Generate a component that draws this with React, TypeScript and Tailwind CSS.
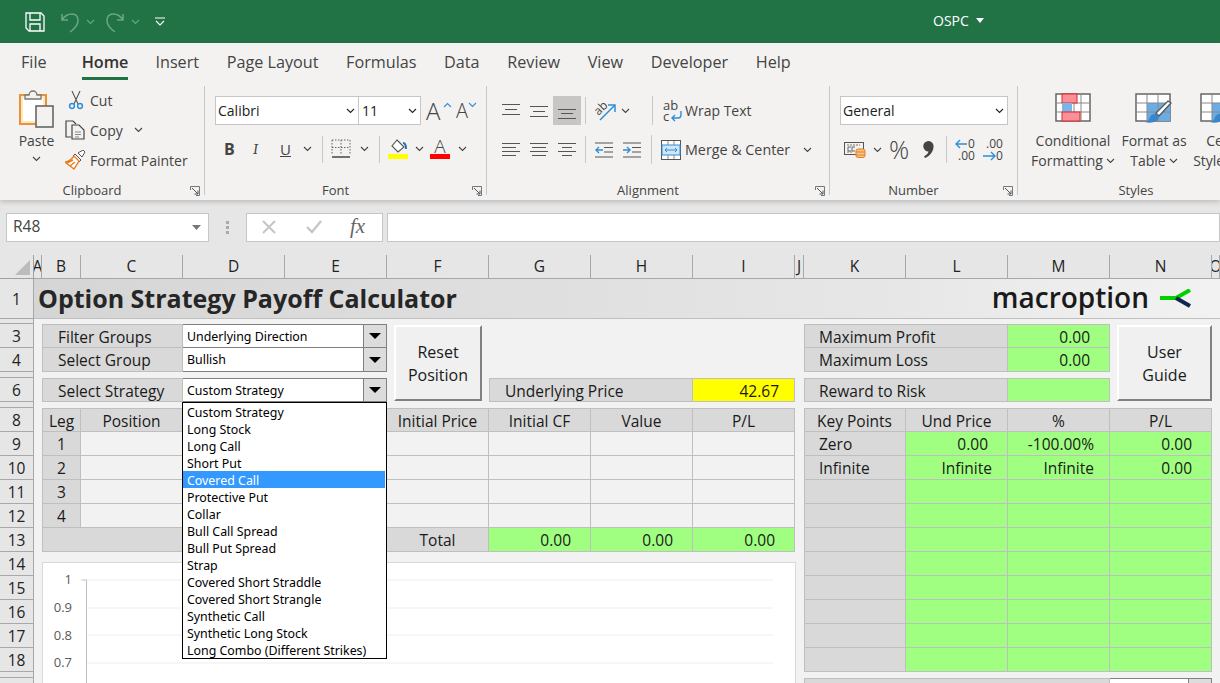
import type { ReactNode } from 'react';

const tabs = ['Insert', 'Page Layout', 'Formulas', 'Data', 'Review', 'View', 'Developer', 'Help'];

const strategies = [
  'Custom Strategy', 'Long Stock', 'Long Call', 'Short Put', 'Covered Call', 'Protective Put', 'Collar',
  'Bull Call Spread', 'Bull Put Spread', 'Strap', 'Covered Short Straddle', 'Covered Short Strangle',
  'Synthetic Call', 'Synthetic Long Stock', 'Long Combo (Different Strikes)',
];

const colHeaders = [
  { col: 'col-start-2', label: 'A' }, { col: 'col-start-3', label: 'B' }, { col: 'col-start-4', label: 'C' },
  { col: 'col-start-5', label: 'D' }, { col: 'col-start-6', label: 'E' }, { col: 'col-start-7', label: 'F' },
  { col: 'col-start-8', label: 'G' }, { col: 'col-start-9', label: 'H' }, { col: 'col-start-10', label: 'I' },
  { col: 'col-start-11', label: 'J' }, { col: 'col-start-12', label: 'K' }, { col: 'col-start-13', label: 'L' },
  { col: 'col-start-14', label: 'M' }, { col: 'col-start-15', label: 'N' }, { col: 'col-start-16', label: 'O' },
];

const rowHeaders = [
  { row: 'row-start-2', label: '1' }, { row: 'row-start-3', label: '' }, { row: 'row-start-4', label: '3' },
  { row: 'row-start-5', label: '4' }, { row: 'row-start-6', label: '' }, { row: 'row-start-7', label: '6' },
  { row: 'row-start-8', label: '' }, { row: 'row-start-9', label: '8' }, { row: 'row-start-10', label: '9' },
  { row: 'row-start-11', label: '10' }, { row: 'row-start-12', label: '11' }, { row: 'row-start-13', label: '12' },
  { row: 'row-start-14', label: '13' }, { row: 'row-start-15', label: '14' }, { row: 'row-start-16', label: '15' },
  { row: 'row-start-17', label: '16' }, { row: 'row-start-18', label: '17' }, { row: 'row-start-19', label: '18' },
  { row: 'row-start-20', label: '' }, { row: 'row-start-21', label: '' },
];

const legRows = [
  { row: 'row-start-10', leg: '1' }, { row: 'row-start-11', leg: '2' },
  { row: 'row-start-12', leg: '3' }, { row: 'row-start-13', leg: '4' },
];

const keyRows = [
  { row: 'row-start-10', label: 'Zero', a: '0.00', aPad: 'pr-[19px]', b: '-100.00%', c: '0.00' },
  { row: 'row-start-11', label: 'Infinite', a: 'Infinite', aPad: 'pr-[15px]', b: 'Infinite', c: '0.00' },
  { row: 'row-start-12', label: '', a: '', aPad: '', b: '', c: '' },
  { row: 'row-start-13', label: '', a: '', aPad: '', b: '', c: '' },
  { row: 'row-start-14', label: '', a: '', aPad: '', b: '', c: '' },
  { row: 'row-start-15', label: '', a: '', aPad: '', b: '', c: '' },
  { row: 'row-start-16', label: '', a: '', aPad: '', b: '', c: '' },
  { row: 'row-start-17', label: '', a: '', aPad: '', b: '', c: '' },
  { row: 'row-start-18', label: '', a: '', aPad: '', b: '', c: '' },
  { row: 'row-start-19', label: '', a: '', aPad: '', b: '', c: '' },
];

function Chevron({ className = '', color = '#444' }: { className?: string; color?: string }) {
  return (
    <svg width="9" height="6" viewBox="0 0 9 6" className={`shrink-0 ${className}`}>
      <path d="M1 1l3.5 3.5L8 1" fill="none" stroke={color} strokeWidth="1.1" />
    </svg>
  );
}

function Launcher() {
  return (
    <svg width="10" height="10" viewBox="0 0 10 10" className="shrink-0">
      <path d="M.5 4V.5H9.5V9.5H6" fill="none" stroke="#777" />
      <path d="M2 2l6 6M8 4.5V8H4.5" fill="none" stroke="#555" />
    </svg>
  );
}

function Sep({ className = '' }: { className?: string }) {
  return <div className={`w-px bg-[#c8c8c8] shrink-0 ${className}`} />;
}

function GroupLabel({ children }: { children: ReactNode }) {
  return (
    <div className="flex items-center h-[20px] pt-[2px] text-[13px] text-[#444]">
      <div className="flex-1 text-center">{children}</div>
      <div className="w-5 flex justify-end pr-[4px]"><Launcher /></div>
    </div>
  );
}

function Lines({ rows }: { rows: [number, number][] }) {
  return (
    <svg width="18" height="18" viewBox="0 0 18 18" className="shrink-0">
      {rows.map(([x, y], i) => (
        <path key={i} d={`M${x} ${y + 0.5}H${18 - (i % 2 === 1 && x === 0 ? 4 : x)}`} stroke="#555" strokeWidth="1" />
      ))}
    </svg>
  );
}

function PasteIcon() {
  return (
    <svg width="36" height="40" viewBox="0 0 36 40">
      <rect x="1" y="6" width="26" height="29" fill="#fde9c0" stroke="#e8923a" strokeWidth="2" />
      <rect x="4" y="9" width="20" height="23" fill="#fff" />
      <path d="M6 10V6h4a4 4 0 0 1 8 0h4v4z" fill="#f3f2f1" stroke="#777" strokeWidth="1.3" />
      <rect x="17" y="17" width="17" height="21" fill="#f3f2f1" stroke="#666" strokeWidth="1.6" />
    </svg>
  );
}

function CutIcon() {
  return (
    <svg width="16" height="20" viewBox="0 0 16 20">
      <path d="M4 1l6 13M12 1L6 14" fill="none" stroke="#555" strokeWidth="1.1" />
      <circle cx="4" cy="16" r="2.4" fill="none" stroke="#2e8fd8" strokeWidth="1.5" />
      <circle cx="12" cy="16" r="2.4" fill="none" stroke="#2e8fd8" strokeWidth="1.5" />
    </svg>
  );
}

function CopyIcon() {
  return (
    <svg width="20" height="20" viewBox="0 0 20 20">
      <path d="M6 17H1V1h7l3 3" fill="none" stroke="#444" strokeWidth="1.2" />
      <path d="M7 5h7l5 5v9H7z" fill="#f3f2f1" stroke="#444" strokeWidth="1.2" />
      <path d="M10 12h6M10 14.5h6M10 17h4" stroke="#888" />
    </svg>
  );
}

function PainterIcon() {
  return (
    <svg width="21" height="20" viewBox="0 0 21 20">
      <path d="M13 3l5-3 2 2-3 5z" fill="#fff" stroke="#555" />
      <path d="M10 4l6 6-2 2-6-6z" fill="#fff" stroke="#555" />
      <path d="M9 6l5 5-5 8-9-7c3 0 6-2 9-6z" fill="#fff" stroke="#e67e22" strokeWidth="1.4" />
      <path d="M2 13l6-3M5 16l5-4" stroke="#e67e22" strokeWidth="1.4" />
    </svg>
  );
}

function BordersIcon() {
  return (
    <svg width="20" height="20" viewBox="0 0 20 20">
      <path d="M1 1H19V16M1 1V16M10 1V16M1 8.5H19" fill="none" stroke="#666" strokeDasharray="1.5 1.5" />
      <path d="M1 18H19" stroke="#444" strokeWidth="1.5" />
    </svg>
  );
}

function FillIcon() {
  return (
    <svg width="20" height="20" viewBox="0 0 20 20">
      <path d="M9 1l7 7-6 5-6-6z" fill="#fff" stroke="#555" strokeWidth="1.1" />
      <path d="M15 4c2 0 3 2 3 6" fill="none" stroke="#1f6fb5" strokeWidth="2" />
      <rect y="15" width="20" height="5" fill="#ffff00" />
    </svg>
  );
}

function OrientIcon() {
  return (
    <svg width="22" height="20" viewBox="0 0 22 20" className="overflow-visible">
      <text x="0" y="12" transform="rotate(-45 6 8)" fontSize="12" fill="#444" fontFamily="Open Sans">ab</text>
      <path d="M6 19L20 5M14 4h7v7" fill="none" stroke="#2e8fd8" strokeWidth="1.5" />
    </svg>
  );
}

function IndentIcon({ out }: { out: boolean }) {
  return (
    <svg width="18" height="16" viewBox="0 0 18 16">
      <path d="M0 1H18M9 5.5H18M9 10H18M0 15H18" stroke="#555" />
      <path d={out ? 'M8 8H1M4 5L1 8l3 3' : 'M0 8h7M4 5l3 3-3 3'} fill="none" stroke="#2e8fd8" strokeWidth="1.4" />
    </svg>
  );
}

function WrapIcon() {
  return (
    <svg width="20" height="22" viewBox="0 0 20 22" className="overflow-visible">
      <text x="0" y="10" fontSize="13" fill="#444" fontFamily="Open Sans">ab</text>
      <text x="0" y="21" fontSize="13" fill="#444" fontFamily="Open Sans">c</text>
      <path d="M18 11v4a3 3 0 0 1-3 3H9M12 15l-3 3 3 3" fill="none" stroke="#2e8fd8" strokeWidth="1.4" />
    </svg>
  );
}

function MergeIcon() {
  return (
    <svg width="20" height="20" viewBox="0 0 20 20">
      <rect x=".5" y=".5" width="19" height="19" fill="#fff" stroke="#555" />
      <rect x="1" y="5" width="18" height="10" fill="#cfe6f7" stroke="#2e8fd8" />
      <path d="M7 1V5M13 1V5M7 15V19M13 15V19" stroke="#888" />
      <path d="M4 10H16M6 8l-2 2 2 2M14 8l2 2-2 2" fill="none" stroke="#2e8fd8" />
    </svg>
  );
}

function AccountingIcon() {
  return (
    <svg width="22" height="17" viewBox="0 0 22 17">
      <rect x=".5" y="1.5" width="19" height="12" fill="#f3f2f1" stroke="#555" />
      <path d="M3 4H16M3 11H9" stroke="#777" strokeDasharray="2 1" />
      <path d="M7 6H4V10H7M11 6H8V10H11" fill="none" stroke="#666" />
      <rect x="12" y="8" width="9" height="8.5" rx="2" fill="#f7c48a" stroke="#e67e22" />
      <path d="M12 11h9M12 14h9" stroke="#e67e22" />
    </svg>
  );
}

function CommaIcon() {
  return (
    <svg width="11" height="17" viewBox="0 0 11 17">
      <path d="M5.5 0a5 5 0 0 1 5 5.5C10.500 11 6.500 15 2 17L1 15.500C3.500 14 5 12.500 5.500 10.500A5 5 0 0 1 5.500 0z" fill="#444" />
    </svg>
  );
}

function DecimalIcon({ inc }: { inc: boolean }) {
  return (
    <svg width="21" height="24" viewBox="0 0 21 24" className="overflow-visible">
      {inc ? (
        <>
          <path d="M12 6H1M5 2L1 6l4 4" fill="none" stroke="#2e8fd8" strokeWidth="1.4" />
          <text x="13" y="10" fontSize="12" fill="#444" fontFamily="Open Sans">0</text>
          <text x="3" y="22" fontSize="12" fill="#444" fontFamily="Open Sans">.00</text>
        </>
      ) : (
        <>
          <text x="3" y="10" fontSize="12" fill="#444" fontFamily="Open Sans">.00</text>
          <path d="M0 18h12M8 14l4 4-4 4" fill="none" stroke="#2e8fd8" strokeWidth="1.4" />
          <text x="13" y="22" fontSize="12" fill="#444" fontFamily="Open Sans">0</text>
        </>
      )}
    </svg>
  );
}

function CondIcon() {
  return (
    <svg width="36" height="29" viewBox="0 0 36 29">
      <rect x="1" y="1" width="34" height="27" fill="#fff" stroke="#666" strokeWidth="1.5" />
      <path d="M8 1V28M19 1V28M26 1V28M1 10H35M1 19H35" stroke="#888" />
      <rect x="7" y="1" width="15" height="9" fill="#fb8f9a" stroke="#d62a2a" />
      <rect x="7" y="10" width="10" height="9" fill="#7db5e6" />
      <rect x="7" y="19" width="18" height="9" fill="#fb8f9a" stroke="#d62a2a" />
    </svg>
  );
}

function TableIcon() {
  return (
    <svg width="38" height="34" viewBox="0 0 38 34">
      <rect x="1" y="1" width="34" height="27" fill="#fff" stroke="#666" strokeWidth="1.5" />
      <rect x="12" y="10" width="23" height="18" fill="#6aade4" />
      <path d="M12 1V28M23 1V28M1 10H35M1 19H35" stroke="#888" />
      <path d="M36 10L24 23l-3-3L33 8z" fill="#fff" stroke="#555" strokeWidth="1.3" />
      <path d="M22 21c3 2 2 7-3 8-3 1-6 1-9 0 3-1 4-2 5-5 1-2 4-4 7-3z" fill="#3b86c9" />
    </svg>
  );
}

function Ribbon() {
  return (
    <div className="relative z-10 bg-[#f3f2f1] shadow-[0_2px_5px_rgba(0,0,0,0.18)]">
      {/* tabs */}
      <div className="flex items-start h-[42px] pl-[21px] text-[16.2px] text-[#444]">
        <div className="pt-[7px]">File</div>
        <div className="ml-[35px] pt-[7px] h-[37px] border-b-[3px] border-[#217346] font-semibold text-[#333]">Home</div>
        <div className="flex gap-[27.6px] ml-[27px] pt-[7px]">
          {tabs.map((t) => <div key={t}>{t}</div>)}
        </div>
      </div>
      {/* groups */}
      <div className="flex h-[115px] text-[14px] text-[#444]">
        <div className="w-[204px] flex flex-col shrink-0">
          <div className="flex flex-1 pl-[19px]">
            <div className="flex flex-col items-center w-[35px] pt-[4px]">
              <PasteIcon />
              <div className="mt-[2px] leading-[20px]">Paste</div>
              <Chevron className="mt-[5px]" />
            </div>
            <div className="flex flex-col ml-[11px]">
              <div className="flex items-center h-[30px] ml-[3px]"><CutIcon /><span className="ml-[6px]">Cut</span></div>
              <div className="flex items-center h-[30px]"><CopyIcon /><span className="ml-[5px]">Copy</span><Chevron className="ml-[11px]" /></div>
              <div className="flex items-center h-[30px]"><PainterIcon /><span className="ml-[4px]">Format Painter</span></div>
            </div>
          </div>
          <GroupLabel>Clipboard</GroupLabel>
        </div>
        <Sep className="h-[109px] mt-px" />

        <div className="w-[281px] flex flex-col shrink-0">
          <div className="flex-1 pl-[10px] pt-[11px]">
            <div className="flex items-center">
              <div className="flex items-center justify-between w-[144px] h-[29px] bg-white border border-[#c6c6c6] pl-[2px] pr-[3px] text-[#222]">Calibri<Chevron color="#222" /></div>
              <div className="flex items-center justify-between w-[62px] h-[29px] bg-white border border-[#c6c6c6] border-l-0 pl-[3px] pr-[3px] text-[#222]">11<Chevron color="#222" /></div>
              <div className="flex items-end w-[19px] ml-[5px] text-[#444]"><span className="text-[24px] leading-[24px] font-light">A</span></div>
              <Chevron className="-ml-[2px] mb-[12px] rotate-180" color="#2e8fd8" />
              <div className="flex items-end ml-[4px] text-[#444]"><span className="text-[20px] leading-[20px] font-light">A</span></div>
              <Chevron className="mb-[12px]" color="#2e8fd8" />
            </div>
            <div className="flex items-center mt-[10px] h-[28px]">
              <span className="ml-[9px] w-[10px] font-bold text-[16px]">B</span>
              <span className="ml-[19px] w-[8px] italic text-[15px] font-serif">I</span>
              <span className="ml-[19px] w-[10px] underline text-[15px]">U</span>
              <Chevron className="ml-[13px]" />
              <Sep className="h-[27px] ml-[10px]" />
              <div className="ml-[8px]"><BordersIcon /></div>
              <Chevron className="ml-[9px]" />
              <Sep className="h-[27px] ml-[10px]" />
              <div className="ml-[8px]"><FillIcon /></div>
              <Chevron className="ml-[7px]" />
              <div className="flex flex-col items-center w-[20px] ml-[6px]">
                <span className="text-[19px] leading-[15px] font-light">A</span>
                <span className="w-[20px] h-[5px] bg-[#ff0000]" />
              </div>
              <Chevron className="ml-[8px]" />
            </div>
          </div>
          <GroupLabel>Font</GroupLabel>
        </div>
        <Sep className="h-[109px] mt-px" />

        <div className="w-[342px] flex flex-col shrink-0">
          <div className="flex-1 pl-[15px] pt-[11px]">
            <div className="flex items-center h-[29px]">
              <Lines rows={[[0, 2], [3, 7], [0, 12]]} />
              <div className="ml-[10px]"><Lines rows={[[0, 4], [3, 9], [0, 14]]} /></div>
              <div className="flex items-center justify-center w-[28px] h-[29px] ml-[5px] bg-[#c8c6c4]"><Lines rows={[[0, 7], [3, 11], [0, 16]]} /></div>
              <Sep className="h-[27px] ml-[4px]" />
              <div className="ml-[8px]"><OrientIcon /></div>
              <Chevron className="ml-[5px]" />
              <Sep className="h-[29px] ml-[22px]" />
              <div className="ml-[10px]"><WrapIcon /></div>
              <span className="ml-[2px]">Wrap Text</span>
            </div>
            <div className="flex items-center h-[29px] mt-[10px]">
              <Lines rows={[[0, 2], [0, 6], [0, 10], [0, 14]]} />
              <div className="ml-[10px]"><Lines rows={[[0, 2], [2, 6], [0, 10], [2, 14]]} /></div>
              <div className="ml-[10px]"><Lines rows={[[0, 2], [4, 6], [0, 10], [4, 14]]} /></div>
              <Sep className="h-[27px] ml-[9px]" />
              <div className="ml-[9px]"><IndentIcon out /></div>
              <div className="ml-[10px]"><IndentIcon out={false} /></div>
              <Sep className="h-[29px] ml-[10px]" />
              <div className="ml-[9px]"><MergeIcon /></div>
              <span className="ml-[4px] text-[14.3px]">Merge &amp; Center</span>
              <Chevron className="ml-[13px]" />
            </div>
          </div>
          <GroupLabel>Alignment</GroupLabel>
        </div>
        <Sep className="h-[109px] mt-px" />

        <div className="w-[187px] flex flex-col shrink-0">
          <div className="flex-1 pl-[10px] pt-[11px]">
            <div className="flex items-center justify-between w-[168px] h-[29px] bg-white border border-[#c6c6c6] pl-[2px] pr-[3px] text-[#222]">General<Chevron color="#222" /></div>
            <div className="flex items-center h-[29px] mt-[10px]">
              <div className="ml-[4px]"><AccountingIcon /></div>
              <Chevron className="ml-[7px]" />
              <span className="ml-[7px] w-[22px] text-[25px] leading-none font-light">%</span>
              <div className="ml-[12px]"><CommaIcon /></div>
              <Sep className="h-[27px] ml-[12px]" />
              <div className="ml-[8px]"><DecimalIcon inc /></div>
              <div className="ml-[7px]"><DecimalIcon inc={false} /></div>
            </div>
          </div>
          <GroupLabel>Number</GroupLabel>
        </div>
        <Sep className="h-[109px] mt-px" />

        <div className="w-[256px] flex flex-col shrink-0">
          <div className="flex flex-1 pt-[8px] pl-[11px] leading-[20px]">
            <div className="flex flex-col items-center w-[88px]">
              <CondIcon />
              <div className="mt-[9px]">Conditional</div>
              <div className="flex items-center gap-[3px]">Formatting<Chevron /></div>
            </div>
            <div className="flex flex-col items-center w-[76px] -ml-px">
              <TableIcon />
              <div className="mt-[4px]">Format as</div>
              <div className="flex items-center gap-[3px]">Table<Chevron /></div>
            </div>
            <div className="flex flex-col items-center w-[60px] -ml-[4px]">
              <div className="self-start ml-[12px]"><TableIcon /></div>
              <div className="mt-[4px]">Cell</div>
              <div className="flex items-center gap-[3px]">Styles<Chevron /></div>
            </div>
          </div>
          <GroupLabel>Styles</GroupLabel>
        </div>
      </div>
    </div>
  );
}

function FormulaBar() {
  return (
    <div className="flex items-center h-[55px] bg-[#e6e6e6] pl-[6px] pb-[1px]">
      <div className="flex items-center justify-between w-[203px] h-[29px] bg-white border border-[#c6c6c6] pl-[6px] pr-[7px] text-[15.5px] text-[#444]">
        R48
        <svg width="9" height="5" viewBox="0 0 9 5"><path d="M0 0h9L4.5 5z" fill="#777" /></svg>
      </div>
      <div className="flex flex-col gap-[2px] mx-[17px]">
        <span className="w-[3px] h-[3px] bg-[#aaa]" />
        <span className="w-[3px] h-[3px] bg-[#aaa]" />
        <span className="w-[3px] h-[3px] bg-[#aaa]" />
      </div>
      <div className="flex items-center w-[137px] h-[29px] bg-white border border-[#c6c6c6] pl-[14px]">
        <svg width="16" height="16" viewBox="0 0 16 16"><path d="M2 2l12 12M14 2L2 14" stroke="#c6c6c6" strokeWidth="2" /></svg>
        <svg width="18" height="16" viewBox="0 0 18 16" className="ml-[28px]"><path d="M2 8l5 5L16 2" fill="none" stroke="#c6c6c6" strokeWidth="2.4" /></svg>
        <span className="ml-[27px] font-['Liberation_Serif',serif] italic text-[21px] text-[#666]">fx</span>
      </div>
      <div className="flex-1 h-[29px] ml-[4px] bg-white border border-[#c6c6c6]" />
    </div>
  );
}

function Cell({ className = '', children }: { className?: string; children?: ReactNode }) {
  return <div className={`flex items-center pt-[3px] border-r border-b border-[#bfbfbf] text-[15.5px] text-[#1a1a1a] ${className}`}>{children}</div>;
}

function Combo({ className = '', children }: { className?: string; children: ReactNode }) {
  return (
    <div className={`flex bg-white border-r border-b border-[#808080] ${className}`}>
      <div className="flex-1 flex items-center pl-[4px] pt-[2px] text-[12.4px] text-black font-['Noto_Sans',sans-serif]">{children}</div>
      <div className="flex items-center justify-center w-[23px] bg-[#dcdcdc] border-l border-[#808080]">
        <svg width="12" height="6" viewBox="0 0 12 6"><path d="M0 0h12L6 6z" fill="#000" /></svg>
      </div>
    </div>
  );
}

function SheetButton({ className = '', top, bottom }: { className?: string; top: string; bottom: string }) {
  return (
    <div className={`flex flex-col items-center justify-center pt-px bg-[#f0f0f0] border-2 border-t-white border-l-white border-r-[#808080] border-b-[#808080] text-[16px] leading-[23px] text-[#1a1a1a] ${className}`}>
      <div>{top}</div>
      <div>{bottom}</div>
    </div>
  );
}

function Chart() {
  return (
    <div className="col-start-3 col-end-11 row-start-15 row-span-7 mt-[10px] -mr-px bg-white border border-[#d9d9d9] overflow-hidden">
      <svg width="754" height="140" className="block" fontFamily="Open Sans" fontSize="13" fill="#595959">
        <path d="M43 17H730M43 45H730M43 72H730M43 100H730" stroke="#eeeeee" />
        <path d="M38.500 17H43.500V140" fill="none" stroke="#bfbfbf" />
        <text x="29" y="21" textAnchor="end">1</text>
        <text x="29" y="49" textAnchor="end">0.9</text>
        <text x="29" y="77" textAnchor="end">0.8</text>
        <text x="29" y="104" textAnchor="end">0.7</text>
      </svg>
    </div>
  );
}

function Sheet() {
  return (
    <div className="grid bg-[#f2f2f2] grid-cols-[34px_8px_39px_102px_102px_102px_102px_102px_102px_102px_9px_102px_102px_102px_102px_8px] grid-rows-[24px_40px_5px_24px_24px_6px_24px_6px_24px_24px_24px_24px_24px_24px_24px_24px_24px_24px_24px_6px_24px]">
      {/* corner + headers */}
      <div className="col-start-1 row-start-1 flex items-end justify-end bg-[#e6e6e6] border-b border-r border-[#a0a0a0] pr-[3px] pb-[3px]">
        <svg width="15" height="15" viewBox="0 0 15 15"><path d="M15 0V15H0z" fill="#bcbcbc" /></svg>
      </div>
      {colHeaders.map((c) => (
        <div key={c.label} className={`${c.col} row-start-1 flex items-center justify-center overflow-hidden bg-[#e6e6e6] border-r border-b border-[#a8a8a8] text-[15.5px] text-[#222]`}>{c.label}</div>
      ))}
      {rowHeaders.map((r) => (
        <div key={r.row} className={`${r.row} col-start-1 flex items-center justify-center overflow-hidden pt-[3px] bg-[#e6e6e6] border-r border-b border-[#a8a8a8] text-[15.5px] text-[#222]`}>{r.label}</div>
      ))}

      {/* title band */}
      <div className="col-start-2 col-end-17 row-start-2 flex items-center justify-between bg-linear-to-r from-[#d5d5d5] via-[#e6e6e6] via-70% to-[#f2f2f2] border-b border-[#bfbfbf] pl-[4px] pr-[28px]">
        <div className="text-[25px] pt-px font-bold text-[#262626]">Option Strategy Payoff Calculator</div>
        <div className="flex items-center">
          <span className="text-[28px] font-semibold text-[#1a1a1a] leading-none -mt-[4px]">macroption</span>
          <svg width="32" height="20" viewBox="0 0 32 20" className="ml-[11px]">
            <path d="M0 9H16L30 1" fill="none" stroke="#00d000" strokeWidth="4" />
            <path d="M16 9l14 8" fill="none" stroke="#12254f" strokeWidth="4" />
          </svg>
        </div>
      </div>

      {/* selectors */}
      <Cell className="col-start-3 col-end-5 row-start-4 bg-[#d9d9d9] border-l border-t pl-[15px]">Filter Groups</Cell>
      <Combo className="col-start-5 col-end-7 row-start-4 border-t">Underlying Direction</Combo>
      <Cell className="col-start-3 col-end-5 row-start-5 bg-[#d9d9d9] border-l pl-[15px]">Select Group</Cell>
      <Combo className="col-start-5 col-end-7 row-start-5">Bullish</Combo>
      <Cell className="col-start-3 col-end-5 row-start-7 bg-[#d9d9d9] border-l border-t pl-[15px]">Select Strategy</Cell>
      <Combo className="col-start-5 col-end-7 row-start-7 border-t">Custom Strategy</Combo>
      <SheetButton className="col-start-7 row-start-4 row-span-4 ml-[7px] mr-[7px] mt-px mb-px" top="Reset" bottom="Position" />

      {/* dropdown list */}
      <div className="col-start-5 row-start-8 relative">
        <div className="absolute z-10 -left-px top-0 w-[205px] bg-white border border-black pr-px font-['Noto_Sans',sans-serif] text-[12.4px] text-black">
          {strategies.map((s) => (
            <div key={s} className={s === 'Covered Call' ? 'h-[17px] leading-[19px] pl-[4px] bg-[#3399ff] text-white' : 'h-[17px] leading-[19px] pl-[4px]'}>{s}</div>
          ))}
        </div>
      </div>

      {/* underlying */}
      <Cell className="col-start-8 col-end-10 row-start-7 bg-[#d9d9d9] border-l border-t pl-[15px]">Underlying Price</Cell>
      <Cell className="col-start-10 row-start-7 bg-[#ffff00] border-t justify-end pr-[15px]">42.67</Cell>

      {/* legs table */}
      <Cell className="col-start-3 row-start-9 bg-[#d9d9d9] border-l border-t justify-center">Leg</Cell>
      <Cell className="col-start-4 row-start-9 bg-[#d9d9d9] border-t justify-center">Position</Cell>
      <Cell className="col-start-5 col-end-7 row-start-9 bg-[#d9d9d9] border-t" />
      <Cell className="col-start-7 row-start-9 bg-[#d9d9d9] border-t justify-center">Initial Price</Cell>
      <Cell className="col-start-8 row-start-9 bg-[#d9d9d9] border-t justify-center">Initial CF</Cell>
      <Cell className="col-start-9 row-start-9 bg-[#d9d9d9] border-t justify-center">Value</Cell>
      <Cell className="col-start-10 row-start-9 bg-[#d9d9d9] border-t justify-center">P/L</Cell>
      {legRows.map((l) => (
        <div key={l.leg} className="contents">
          <Cell className={`${l.row} col-start-3 bg-[#d9d9d9] border-l justify-center`}>{l.leg}</Cell>
          <Cell className={`${l.row} col-start-4 col-end-8`} />
          <Cell className={`${l.row} col-start-8`} />
          <Cell className={`${l.row} col-start-9`} />
          <Cell className={`${l.row} col-start-10`} />
        </div>
      ))}
      <Cell className="col-start-3 col-end-7 row-start-14 bg-[#d9d9d9] border-l" />
      <Cell className="col-start-7 row-start-14 bg-[#d9d9d9] justify-center">Total</Cell>
      <Cell className="col-start-8 row-start-14 bg-[#a0ff80] justify-end pr-[19px]">0.00</Cell>
      <Cell className="col-start-9 row-start-14 bg-[#a0ff80] justify-end pr-[19px]">0.00</Cell>
      <Cell className="col-start-10 row-start-14 bg-[#a0ff80] justify-end pr-[19px]">0.00</Cell>

      <Chart />

      {/* right summary */}
      <Cell className="col-start-12 col-end-14 row-start-4 bg-[#d9d9d9] border-l border-t pl-[14px]">Maximum Profit</Cell>
      <Cell className="col-start-14 row-start-4 bg-[#a0ff80] border-t justify-end pr-[19px]">0.00</Cell>
      <Cell className="col-start-12 col-end-14 row-start-5 bg-[#d9d9d9] border-l pl-[14px]">Maximum Loss</Cell>
      <Cell className="col-start-14 row-start-5 bg-[#a0ff80] justify-end pr-[19px]">0.00</Cell>
      <Cell className="col-start-12 col-end-14 row-start-7 bg-[#d9d9d9] border-l border-t pl-[14px]">Reward to Risk</Cell>
      <Cell className="col-start-14 row-start-7 bg-[#a0ff80] border-t" />
      <SheetButton className="col-start-15 row-start-4 row-span-4 ml-[7px] mt-px mb-px" top="User" bottom="Guide" />

      {/* key points */}
      <Cell className="col-start-12 row-start-9 bg-[#d9d9d9] border-l border-t pl-[12px]">Key Points</Cell>
      <Cell className="col-start-13 row-start-9 bg-[#d9d9d9] border-t justify-center">Und Price</Cell>
      <Cell className="col-start-14 row-start-9 bg-[#d9d9d9] border-t justify-center">%</Cell>
      <Cell className="col-start-15 row-start-9 bg-[#d9d9d9] border-t justify-center">P/L</Cell>
      {keyRows.map((k) => (
        <div key={k.row} className="contents">
          <Cell className={`${k.row} col-start-12 bg-[#d9d9d9] border-l pl-[14px]`}>{k.label}</Cell>
          <Cell className={`${k.row} col-start-13 bg-[#a0ff80] justify-end ${k.aPad}`}>{k.a}</Cell>
          <Cell className={`${k.row} col-start-14 bg-[#a0ff80] justify-end pr-[15px]`}>{k.b}</Cell>
          <Cell className={`${k.row} col-start-15 bg-[#a0ff80] justify-end pr-[19px]`}>{k.c}</Cell>
        </div>
      ))}
      <Cell className="col-start-12 col-end-15 row-start-21 bg-[#d9d9d9] border-l border-t" />
      <Combo className="col-start-15 row-start-21 border-t"> </Combo>
    </div>
  );
}

export default function App() {
  return (
    <div className="w-[1220px] h-[683px] overflow-hidden font-['Open_Sans',sans-serif] bg-[#f2f2f2]">
      <div className="flex items-center h-[43px] bg-[#217346]">
        <svg width="22" height="22" viewBox="0 0 22 22" className="ml-[24px]">
          <path d="M2 2H17L20 5V20H5L2 17z" fill="none" stroke="#fff" strokeWidth="1.3" />
          <path d="M6 2V9H16V2M6 20V13H16V20" fill="none" stroke="#fff" strokeWidth="1.3" />
        </svg>
        <svg width="20" height="22" viewBox="0 0 20 22" className="ml-[14px]">
          <path d="M2 3V9H8M2 9C5 4 9 3 12 3C16 3 18 6 18 10C18 14 14 18 10 21" fill="none" stroke="#6aa587" strokeWidth="1.5" />
        </svg>
        <Chevron className="ml-[6px]" color="#6aa587" />
        <svg width="20" height="22" viewBox="0 0 20 22" className="ml-[10px]">
          <path d="M18 3V9H12M18 9C15 4 11 3 8 3C4 3 2 6 2 10C2 14 6 18 10 21" fill="none" stroke="#6aa587" strokeWidth="1.5" />
        </svg>
        <Chevron className="ml-[6px]" color="#6aa587" />
        <svg width="10" height="10" viewBox="0 0 10 10" className="ml-[15px]">
          <path d="M0 1H10M1 4l4 4 4-4" fill="none" stroke="#fff" strokeWidth="1.1" />
        </svg>
        <div className="ml-[768px] -mt-[3px] text-[14px] text-white">OSPC</div>
        <svg width="8" height="5" viewBox="0 0 8 5" className="ml-[7px] -mt-[2px]"><path d="M0 0h8L4 5z" fill="#fff" /></svg>
      </div>
      <Ribbon />
      <FormulaBar />
      <Sheet />
    </div>
  );
}
